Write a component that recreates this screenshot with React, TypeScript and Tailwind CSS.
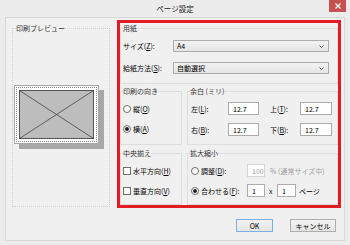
import React from 'react';

const font = { fontFamily: '"Noto Sans CJK JP", "Noto Sans", sans-serif' };

const U: React.FC<{ children: React.ReactNode }> = ({ children }) => (
  <span className="underline underline-offset-1">{children}</span>
);

const Radio: React.FC<{ checked?: boolean }> = ({ checked }) => (
  <span className="w-[8px] h-[8px] rounded-full border border-[#6d6d6d] bg-white flex items-center justify-center shrink-0">
    {checked && <span className="w-[4px] h-[4px] rounded-full bg-[#222]" />}
  </span>
);

const Check: React.FC = () => (
  <span className="w-[8px] h-[8px] border border-[#6d6d6d] bg-white shrink-0" />
);

const Select: React.FC<{ value: string }> = ({ value }) => (
  <div className="w-[156px] h-[12px] border border-[#acacac] bg-gradient-to-b from-[#f2f2f2] to-[#e5e5e5] flex items-center justify-between pl-[3px] pr-[4px]">
    <span>{value}</span>
    <svg width="5" height="3" viewBox="0 0 5 3">
      <path d="M0.5 0.5 L2.5 2.5 L4.5 0.5" fill="none" stroke="#444" strokeWidth="0.9" />
    </svg>
  </div>
);

const Input: React.FC<{ value: string; w: string; disabled?: boolean }> = ({ value, w, disabled }) => (
  <div
    className={`${w} h-[13px] border bg-white flex items-center pl-[4px] ${
      disabled ? 'border-[#d5d5d5] text-[#a0a0a0]' : 'border-[#acacac] text-black'
    }`}
  >
    {value}
  </div>
);

const Group: React.FC<{ title: string; className: string; children?: React.ReactNode }> = ({ title, className, children }) => (
  <fieldset className={`border border-[#dedede] ${className}`}>
    <legend className="ml-[2px] text-[7px] leading-[10px] text-[#333]">{title}</legend>
    {children}
  </fieldset>
);

const App: React.FC = () => {
  return (
    <div className="w-[350px] h-[245px] bg-[#ececec] flex flex-col text-[7px] leading-[10px] text-black overflow-hidden" style={font}>
      <div className="h-[17px] relative flex items-center justify-center text-[7.5px] text-[#222]">
        ページ設定
        <div className="absolute right-[4px] top-0 w-[17px] h-[12px] bg-[#c75050] flex items-center justify-center">
          <svg width="6" height="6" viewBox="0 0 6 6">
            <path d="M0.5 0.5 L5.5 5.5 M5.5 0.5 L0.5 5.5" stroke="white" strokeWidth="1.3" />
          </svg>
        </div>
      </div>

      <div className="mx-[5px] h-[224px] bg-[#f0f0f0] border border-[#d8d8d8] flex flex-col">
        <div className="flex items-start pl-[6px] pt-[2px]">
          <fieldset className="mt-[3px] w-[98px] h-[184px] border border-dotted border-[#cfcfcf] pl-[1px]">
            <legend className="ml-[2px] text-[7px] leading-[10px] text-[#333]">印刷プレビュー</legend>
            <div className="mt-[52px] w-[85px] h-[59px] bg-white border border-[#a8a8a8] p-[1px] shadow-[5px_5px_0_#a8a8a8]">
              <div className="w-full h-full border border-dotted border-[#8a8a8a] p-[2px]">
                <svg className="w-full h-full" viewBox="0 0 75 49" preserveAspectRatio="none">
                  <rect x="0.5" y="0.5" width="74" height="48" fill="#bdbdbd" stroke="#555" strokeWidth="1" />
                  <path d="M0.5 0.5 L74.5 48.5 M74.5 0.5 L0.5 48.5" stroke="#333" strokeWidth="0.7" />
                </svg>
              </div>
            </div>
          </fieldset>

          <div className="ml-[7px] w-[224px] h-[188px] border-[3px] border-[#e31b23] flex flex-col">
            <Group title="用紙" className="w-full h-[61px]">
              <div className="mt-[7px] h-[12px] flex items-center pl-[2px]">
                <span className="w-[50px]">
                  サイズ(<U>Z</U>):
                </span>
                <Select value="A4" />
              </div>
              <div className="mt-[10px] h-[12px] flex items-center pl-[2px]">
                <span className="w-[50px]">
                  給紙方法(<U>S</U>):
                </span>
                <Select value="自動選択" />
              </div>
            </Group>

            <div className="mt-[2px] flex">
              <Group title="印刷の向き" className="w-[62px] h-[59px]">
                <div className="mt-[7px] h-[12px] flex items-center gap-[2px] pl-[2px]">
                  <Radio />
                  <span>
                    縦(<U>O</U>)
                  </span>
                </div>
                <div className="mt-[8px] h-[12px] flex items-center gap-[2px] pl-[2px]">
                  <Radio checked />
                  <span>
                    横(<U>A</U>)
                  </span>
                </div>
              </Group>
              <Group title="余白 (ミリ)" className="ml-[5px] w-[151px] h-[59px]">
                <div className="mt-[6px] flex items-center pl-[3px]">
                  <span className="w-[37px]">
                    左(<U>L</U>):
                  </span>
                  <Input value="12.7" w="w-[31px]" />
                  <span className="ml-[11px] w-[30px]">
                    上(<U>T</U>):
                  </span>
                  <Input value="12.7" w="w-[32px]" />
                </div>
                <div className="mt-[8px] flex items-center pl-[3px]">
                  <span className="w-[37px]">
                    右(<U>B</U>):
                  </span>
                  <Input value="12.7" w="w-[31px]" />
                  <span className="ml-[11px] w-[30px]">
                    下(<U>B</U>):
                  </span>
                  <Input value="12.7" w="w-[32px]" />
                </div>
              </Group>
            </div>

            <div className="mt-[3px] flex">
              <Group title="中央揃え" className="w-[62px] h-[57px]">
                <div className="mt-[7px] h-[12px] flex items-center gap-[2px] pl-[2px]">
                  <Check />
                  <span>
                    水平方向(<U>H</U>)
                  </span>
                </div>
                <div className="mt-[8px] h-[12px] flex items-center gap-[2px] pl-[2px]">
                  <Check />
                  <span>
                    垂直方向(<U>V</U>)
                  </span>
                </div>
              </Group>
              <Group title="拡大縮小" className="ml-[5px] w-[151px] h-[57px]">
                <div className="mt-[6px] flex items-center pl-[3px]">
                  <Radio />
                  <span className="ml-[2px] w-[46px]">
                    調整(<U>D</U>):
                  </span>
                  <Input value="100" w="w-[18px]" disabled />
                  <span className="ml-[5px] text-[#a0a0a0]">% (通常サイズ中)</span>
                </div>
                <div className="mt-[7px] flex items-center pl-[3px]">
                  <Radio checked />
                  <span className="ml-[2px] w-[46px]">
                    合わせる(<U>F</U>):
                  </span>
                  <Input value="1" w="w-[18px]" />
                  <span className="ml-[4px] w-[8px]">x</span>
                  <Input value="1" w="w-[19px]" />
                  <span className="ml-[3px]">ページ</span>
                </div>
              </Group>
            </div>
          </div>
        </div>

        <div className="mt-[11px] flex justify-end gap-[17px] pr-[8px]">
          <button className="w-[37px] h-[13px] border border-[#7eaee0] bg-gradient-to-b from-[#f2f2f2] to-[#e5e5e5] flex items-center justify-center text-[7px]">
            OK
          </button>
          <button className="w-[46px] h-[13px] border border-[#acacac] bg-gradient-to-b from-[#f2f2f2] to-[#e5e5e5] flex items-center justify-center text-[7px]">
            キャンセル
          </button>
        </div>
      </div>
    </div>
  );
};

export default App;
